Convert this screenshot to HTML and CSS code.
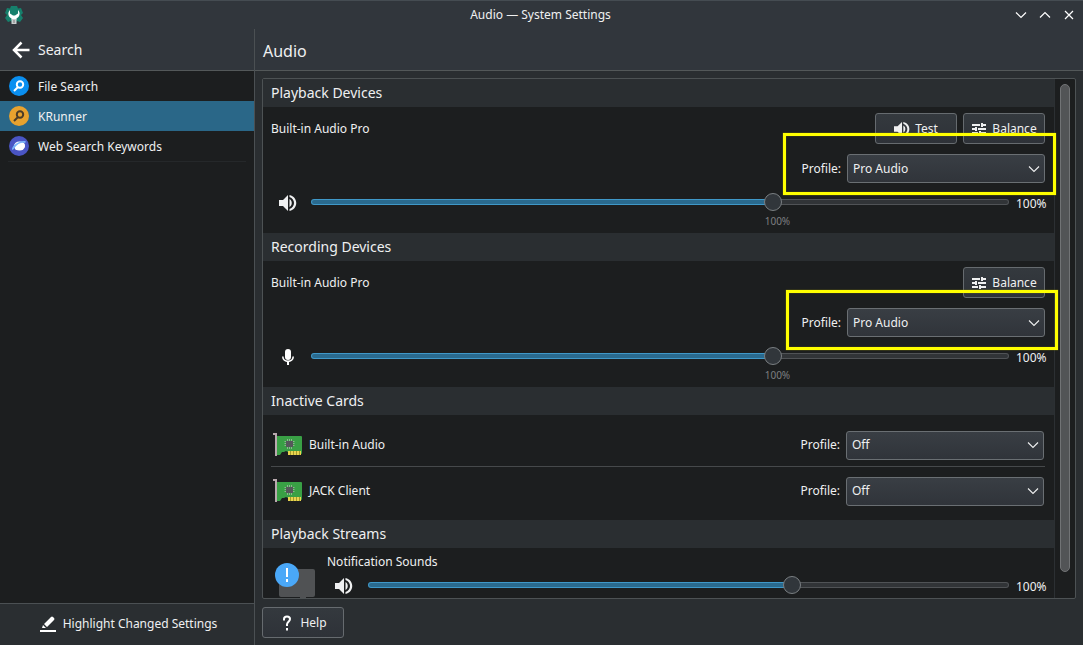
FILE: index.html
```
<!DOCTYPE html>
<html lang="en">
<head>
<meta charset="utf-8">
<title>Audio — System Settings</title>
<link rel="stylesheet" href="styles.css">
</head>
<body>
<svg class="symbols" aria-hidden="true">
  <symbol id="speaker" viewBox="0 0 18 18"><path fill="currentColor" d="M0 6h4l5-5v16l-5-5H0zM10.500 5v8c3-1.500 3-6.500 0-8zM10.500 1c9 2 9 14 0 16v-2c6-2 6-10 0-12z"/></symbol>
  <symbol id="sliders" viewBox="0 0 16 16"><path fill="currentColor" d="M1 3h8v2H1zM10 2h2v1h3v2h-3v1h-2zM1 7h3V6h2v4H4V9H1zM7 7h8v2H7zM1 11h6v2H1zM8 10h2v1h5v2h-5v1H8z"/></symbol>
  <symbol id="card" viewBox="0 0 30 26"><path fill="#39a045" d="M4 4h24q1 0 1 1v16q0 1-1 1H15v-2l-2-1-2 1H9l-2 3H4z"/><path fill="#b9a9ae" d="M0 1h4v23H2V3H0z"/><path fill="#e9d44f" d="M15 19h13v4H15z"/><path stroke="#a39a2c" d="M17.500 19v4M20.500 19v4M23.500 19v4M26.500 19v4"/><path fill="none" stroke="#8fb391" d="M14.500 7v10M16.500 7v10M18.500 7v10M11.500 9.500h10M11.500 11.500h10M11.500 13.500h10"/><path fill="#55585a" d="M13 9h7v6h-7z"/></symbol>
</svg>

<header class="titlebar">
  <svg class="app-icon" viewBox="0 0 18 18"><path fill="#16806c" d="M6 0h6l1 2.500 3-.5 2 5-2 2 2 3-3 4-3-1-1 2H7l-1-2-3 1-3-4 2-3-2-2 2-5 3 .5z"/><path fill="#fff" d="M5 4v3.500l3 2h2l3-2V4c3 3 1.500 7-1.500 8.500v1h-5v-1C3.500 11 2 7 5 4z"/><path fill="#c9cccd" d="M6.500 13h5v5h-5z"/><path stroke="#777" d="M9 14v3"/></svg>
  <span class="window-title">Audio — System Settings</span>
  <div class="window-buttons">
    <button aria-label="Minimize"><svg viewBox="0 0 12 12"><path d="M1 3.500l5 5 5-5"/></svg></button>
    <button aria-label="Maximize"><svg viewBox="0 0 12 12"><path d="M1 8.500l5-5 5 5"/></svg></button>
    <button aria-label="Close"><svg viewBox="0 0 12 12"><path d="M2 2l8 8M10 2l-8 8"/></svg></button>
  </div>
</header>

<div class="window">
  <aside class="sidebar">
    <button class="back"><svg viewBox="0 0 18 18"><path fill="none" stroke="#fff" stroke-width="2.500" d="M17.500 9H2M9.500 1.500L2 9l7.500 7.500"/></svg>Search</button>
    <nav class="modules">
      <a href="#file-search"><svg viewBox="0 0 20 20"><circle cx="10" cy="10" r="10" fill="#0a8ff0"/><g fill="none" stroke="#fff" stroke-width="2"><circle cx="11" cy="8.500" r="3.200"/><path d="M9 11l-4 4"/></g></svg><span>File Search</span></a>
      <a href="#krunner" class="current"><svg viewBox="0 0 20 20"><circle cx="10" cy="10" r="10" fill="#e8a22e"/><g fill="none" stroke="#4b3c27" stroke-width="2"><circle cx="11" cy="8.500" r="3.200"/><path d="M9 11l-4 4"/></g></svg><span>KRunner</span></a>
      <a href="#web"><svg viewBox="0 0 20 20"><circle cx="10" cy="10" r="10" fill="#4a55c4"/><ellipse cx="10.500" cy="10" rx="5.500" ry="4.500" fill="#fff"/><path fill="#7bb5fa" d="M3 14c-1-4 7-10 13-9 1 0 1 1 0 2-4-1-9 2-11 6z"/><path fill="#fff" d="M6 13c1-4 5-6 9-6 2 3 0 7-5 7-2 0-3 0-4-1z"/></svg><span>Web Search Keywords</span></a>
    </nav>
    <button class="highlight-changed"><svg viewBox="0 0 16 16"><path fill="#fff" d="M0 14h16v2H0zM2 12l1-3 3 3zM4 8l7-7q1-1 2 0l1 1q1 1 0 2l-7 7z"/></svg>Highlight Changed Settings</button>
  </aside>

  <main class="page">
    <h1>Audio</h1>
    <div class="page-body">
      <div class="panel">
        <div class="content">
          <section>
            <h2>Playback Devices</h2>
            <div class="device">
              <div class="device-head"><span>Built-in Audio Pro</span>
                <button class="button"><svg class="icon16"><use href="#speaker"/></svg>Test</button>
                <button class="button"><svg class="icon16"><use href="#sliders"/></svg>Balance</button>
              </div>
              <div class="profile"><label for="p1">Profile:</label><select id="p1"><option>Pro Audio</option></select><div class="marker marker-playback"></div></div>
              <div class="volume">
                <svg class="icon18"><use href="#speaker"/></svg>
                <input type="range" max="150" value="100" aria-label="Playback volume">
                <output>100%</output>
              </div>
              <div class="tick"><span>100%</span></div>
            </div>
          </section>
          <section>
            <h2>Recording Devices</h2>
            <div class="device">
              <div class="device-head"><span>Built-in Audio Pro</span>
                <button class="button"><svg class="icon16"><use href="#sliders"/></svg>Balance</button>
              </div>
              <div class="profile"><label for="p2">Profile:</label><select id="p2"><option>Pro Audio</option></select><div class="marker marker-recording"></div></div>
              <div class="volume">
                <svg class="icon18" viewBox="0 0 18 18"><path fill="#fff" d="M6 4a3 3 0 0 1 6 0v5a3 3 0 0 1-6 0z"/><path fill="none" stroke="#fff" stroke-width="1.600" d="M3.800 8.500c0 6.500 10.400 6.500 10.400 0"/><path fill="#fff" d="M8 13h2v4H8z"/></svg>
                <input type="range" max="150" value="100" aria-label="Recording volume">
                <output>100%</output>
              </div>
              <div class="tick"><span>100%</span></div>
            </div>
          </section>
          <section>
            <h2>Inactive Cards</h2>
            <ul class="cards">
              <li><svg class="card-icon"><use href="#card"/></svg><span>Built-in Audio</span><label for="p3">Profile:</label><select id="p3"><option>Off</option></select></li>
              <li><svg class="card-icon"><use href="#card"/></svg><span>JACK Client</span><label for="p4">Profile:</label><select id="p4"><option>Off</option></select></li>
            </ul>
          </section>
          <section>
            <h2>Playback Streams</h2>
            <div class="stream">
              <svg class="stream-icon" viewBox="0 0 42 40"><path fill="#505254" d="M5 8h34q2 0 2 2v24q0 2-2 2H32v4H26v-4H7q-2 0-2-2z"/><circle cx="13" cy="14" r="12" fill="#4aa8f8"/><path stroke="#fff" stroke-width="2" d="M13 7v9M13 18v3"/></svg>
              <div class="stream-main">
                <span class="stream-name">Notification Sounds</span>
                <div class="volume">
                  <svg class="icon18"><use href="#speaker"/></svg>
                  <input type="range" max="150" value="100" aria-label="Notification volume">
                  <output>100%</output>
                </div>
              </div>
            </div>
          </section>
        </div>
        <div class="scrollbar"><div class="scroll-thumb"></div></div>
      </div>
      <button class="button help"><svg class="icon16" viewBox="0 0 16 16"><path fill="none" stroke="#fff" stroke-width="2" d="M5 5.500V4q0-2.500 3-2.500t3 2.500c0 2.500-3 3-3 5.500v1.500M8 13v2.500"/></svg>Help</button>
    </div>
  </main>
</div>
</body>
</html>
```
FILE: styles.css
```
* { box-sizing: border-box; }

body {
  margin: 0;
  height: 100vh;
  display: flex;
  flex-direction: column;
  overflow: hidden;
  background: #2a2e31;
  color: #eff0f1;
  font: 12px/18px "Noto Sans", sans-serif;
}

button, select, input { font: inherit; color: inherit; margin: 0; }
button { background: none; border: 0; padding: 0; }
svg { flex: none; }
.symbols { position: absolute; width: 0; height: 0; }

.titlebar {
  flex: none;
  display: grid;
  grid-template-columns: 1fr auto 1fr;
  align-items: center;
  height: 29px;
  padding: 0 7px 1px 5px;
  border-top: 1px solid #454c52;
  background: #31363c;
}
.app-icon { width: 18px; height: 18px; }
.window-buttons { display: flex; justify-content: flex-end; gap: 10px; }
.window-buttons button { width: 14px; height: 14px; display: grid; place-items: center; }
.window-buttons svg { width: 12px; height: 12px; fill: none; stroke: #fff; stroke-width: 1.2; }

.window { flex: 1; min-height: 0; display: flex; }

.sidebar {
  flex: none;
  width: 255px;
  display: flex;
  flex-direction: column;
  background: #1c1e1f;
  border-right: 1px solid #4b5053;
}
.back {
  height: 42px;
  display: flex;
  align-items: center;
  gap: 8px;
  padding-left: 12px;
  background: #31363c;
  border-bottom: 1px solid #535859;
  font-size: 14px;
}
.back svg { width: 18px; height: 18px; }
.modules { flex: 1; }
.modules a {
  display: flex;
  align-items: center;
  gap: 9px;
  height: 30px;
  padding-left: 9px;
  color: inherit;
  text-decoration: none;
}
.modules span { padding-top: 2px; }
.modules svg { width: 20px; height: 20px; }
.modules .current { background: #2a6788; }
.modules::after { content: ""; display: block; margin: 0 8px; border-top: 1px solid #25282a; }
.highlight-changed {
  display: flex;
  align-items: center;
  justify-content: center;
  gap: 7px;
  height: 42px;
  padding: 0 0 2px 3px;
  border-top: 1px solid #4b5053;
  background: #2a2e31;
}
.highlight-changed svg { width: 16px; height: 16px; }

.page { flex: 1; min-width: 0; display: flex; flex-direction: column; }
h1 {
  margin: 0;
  height: 42px;
  padding: 10px 8px;
  background: #31363c;
  border-bottom: 1px solid #535859;
  font-size: 16px;
  font-weight: 400;
  line-height: 24px;
}
.page-body {
  flex: 1;
  min-height: 0;
  display: flex;
  flex-direction: column;
  align-items: flex-start;
  gap: 8px;
  padding: 7px;
}
.panel {
  flex: 1;
  min-height: 0;
  align-self: stretch;
  display: flex;
  overflow: hidden;
  background: #1c1e1f;
  border: 1px solid #4d5254;
  border-radius: 2px;
}
.content { flex: 1; min-width: 0; }
.scrollbar { flex: none; width: 21px; padding: 5px; border-left: 1px solid #2c3033; }
.scroll-thumb { width: 10px; height: 488px; border: 1px solid #717375; border-radius: 5px; background: #525456; }

h2 {
  margin: 0;
  height: 28px;
  padding: 0 8px;
  background: #2a2e31;
  font-size: 14px;
  font-weight: 400;
  line-height: 28px;
}

.button {
  display: flex;
  align-items: center;
  justify-content: center;
  gap: 5px;
  width: 82px;
  height: 31px;
  border: 1px solid #666b6f;
  border-radius: 3px;
  background: linear-gradient(#34393e, #2e3238);
}
.icon16 { width: 16px; height: 16px; }
.icon18 { width: 18px; height: 18px; }

select {
  appearance: none;
  width: 198px;
  height: 29px;
  padding: 0 5px;
  border: 1px solid #6a6f73;
  border-radius: 3px;
  background:
    url("data:image/svg+xml,%3Csvg xmlns='http://www.w3.org/2000/svg' width='12' height='8'%3E%3Cpath d='M1 1.500l5 5 5-5' fill='none' stroke='%23eff0f1' stroke-width='1.100'/%3E%3C/svg%3E") no-repeat right 4px center,
    linear-gradient(#393e44, #30343a);
}

.device { height: 126px; padding: 6px 9px 0 8px; }
.device-head { display: flex; align-items: center; gap: 6px; height: 31px; }
.device-head span { flex: 1; }
.profile { position: relative; display: flex; justify-content: flex-end; align-items: center; gap: 6px; margin-top: 10px; }
.marker { position: absolute; border: 3px solid #ffff00; box-shadow: 0 0 1px #a0a000, inset 0 0 1px #a0a000; pointer-events: none; }
.marker-playback { inset: -21px -11px -12px auto; width: 273px; }
.marker-recording { inset: -18px -13px -13px auto; width: 272px; }

.volume { display: flex; align-items: center; height: 20px; margin-top: 9px; padding-left: 8px; }
.volume svg { margin-top: 2px; }
.volume input { flex: 1; min-width: 0; margin-left: 14px; }
.volume output { width: 36px; padding: 3px 0 0 7px; margin-right: 0; white-space: nowrap; }

input[type="range"] { appearance: none; height: 18px; background: none; }
input[type="range"]::-webkit-slider-runnable-track {
  height: 6px;
  border: 1px solid transparent;
  border-radius: 3px;
  background:
    linear-gradient(90deg, #2a6a8e 66%, #313437 66%) padding-box,
    linear-gradient(90deg, #3f98c8 66%, #505356 66%) border-box;
}
input[type="range"]::-webkit-slider-thumb {
  appearance: none;
  width: 18px;
  height: 18px;
  margin-top: -7px;
  border: 1px solid #7a7f82;
  border-radius: 50%;
  background: #31363b;
}
.tick {
  display: grid;
  grid-template-columns: 65fr 35fr;
  margin: 1px 36px 0 40px;
  color: #7c7f81;
  font-size: 10px;
  line-height: 16px;
}
.tick span { grid-column: 2; }

.cards { margin: 0; padding: 6px 9px 7px 8px; list-style: none; }
.cards li { display: flex; align-items: center; gap: 6px; height: 46px; padding: 2px 1px 0 0; }
.cards li:first-child { border-bottom: 1px solid #46494b; padding-top: 3px; }
.cards span { flex: 1; }
.card-icon { width: 30px; height: 26px; margin-left: 2px; }

.stream { display: flex; gap: 11px; padding: 5px 9px 0 11px; }
.stream-icon { width: 42px; height: 40px; margin-top: 8px; }
.stream-main { flex: 1; min-width: 0; }
.stream-name { display: block; }
.stream .volume { margin-top: 4px; }
.stream .volume input { margin-left: 15px; }
```
